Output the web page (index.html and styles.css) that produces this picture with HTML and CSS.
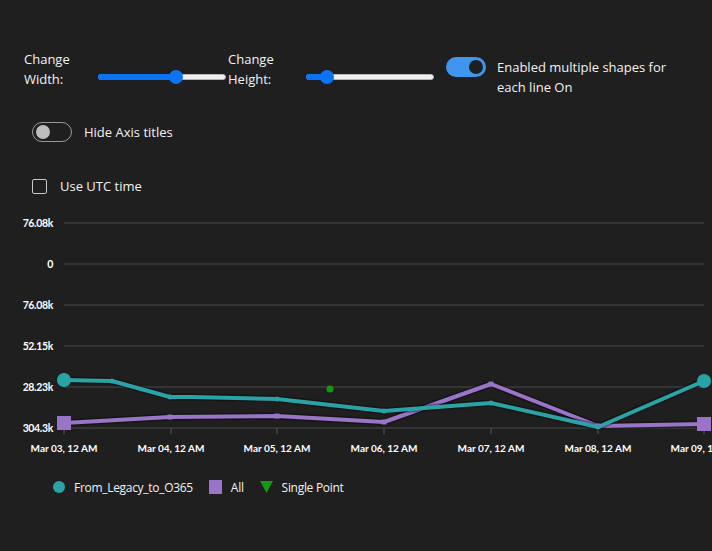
FILE: index.html
```html
<!DOCTYPE html>
<html>
<head>
<meta charset="utf-8">
<link rel="stylesheet" href="styles.css">
</head>
<body>
<div class="page">
  <div class="controls">
    <div class="label label-w">Change Width:</div>
    <div class="slider"><div class="fill" style="width:61%"></div><div class="thumb" style="left:61%"></div></div>
    <div class="label label-h">Change Height:</div>
    <div class="slider"><div class="fill" style="width:16%"></div><div class="thumb" style="left:16%"></div></div>
    <div class="toggle-group">
      <div class="toggle on"><div class="knob"></div></div>
      <div class="toggle-text">Enabled multiple shapes for each line On</div>
    </div>
  </div>
  <div class="row row-axis">
    <div class="toggle off"><div class="knob"></div></div>
    <div class="row-text">Hide Axis titles</div>
  </div>
  <div class="row row-utc">
    <div class="checkbox"></div>
    <div class="row-text utc-text">Use UTC time</div>
  </div>
  <svg class="chart" width="712" height="260" viewBox="0 210 712 260">
    <defs>
      <clipPath id="yclip"><rect x="23" y="200" width="689" height="280"/></clipPath>
    </defs>
    <g class="grid">
      <line x1="64" y1="223" x2="704" y2="223"/>
      <line x1="64" y1="264" x2="704" y2="264"/>
      <line x1="64" y1="305" x2="704" y2="305"/>
      <line x1="64" y1="346" x2="704" y2="346"/>
      <line x1="64" y1="387" x2="704" y2="387"/>
      <line x1="64" y1="428" x2="704" y2="428"/>
    </g>
    <g class="ticks">
      <line x1="64" y1="428" x2="64" y2="434"/>
      <line x1="171" y1="428" x2="171" y2="434"/>
      <line x1="277" y1="428" x2="277" y2="434"/>
      <line x1="384" y1="428" x2="384" y2="434"/>
      <line x1="491" y1="428" x2="491" y2="434"/>
      <line x1="598" y1="428" x2="598" y2="434"/>
      <line x1="704" y1="428" x2="704" y2="434"/>
    </g>
    <g class="ylabels" clip-path="url(#yclip)">
      <text x="53" y="227">76.08k</text>
      <text x="53" y="268">0</text>
      <text x="53" y="309">76.08k</text>
      <text x="53" y="350">152.15k</text>
      <text x="53" y="391">28.23k</text>
      <text x="53" y="432">304.3k</text>
    </g>
    <g class="xlabels">
      <text x="64" y="452">Mar 03, 12 AM</text>
      <text x="171" y="452">Mar 04, 12 AM</text>
      <text x="277" y="452">Mar 05, 12 AM</text>
      <text x="384" y="452">Mar 06, 12 AM</text>
      <text x="491" y="452">Mar 07, 12 AM</text>
      <text x="598" y="452">Mar 08, 12 AM</text>
      <text x="704" y="452">Mar 09, 12 AM</text>
    </g>
    <polyline class="shadow" points="64,423 170,417 277,416 384,422 491,384 598,426 704,424"/>
    <polyline class="purple" points="64,423 170,417 277,416 384,422 491,384 598,426 704,424"/>
    <polyline class="shadow" points="64,380 112,381 170,397 193,397 277,399 384,411 491,403 598,427 704,381"/>
    <polyline class="teal" points="64,380 112,381 170,397 193,397 277,399 384,411 491,403 598,427 704,381"/>
    <g class="pm">
      <rect x="167.5" y="414.5" width="5" height="5"/>
      <rect x="274.5" y="413.5" width="5" height="5"/>
      <rect x="381.5" y="419.5" width="5" height="5"/>
      <rect x="488.5" y="381.5" width="5" height="5"/>
      <rect x="595.5" y="423.5" width="5" height="5"/>
    </g>
    <g class="tm">
      <circle cx="112" cy="381" r="2.5"/>
      <circle cx="170" cy="397" r="2.5"/>
      <circle cx="277" cy="399" r="2.5"/>
      <circle cx="384" cy="411" r="2.5"/>
      <circle cx="491" cy="403" r="2.5"/>
      <circle cx="598" cy="427" r="2.5"/>
    </g>
    <rect class="psq" x="57" y="416" width="14" height="14"/>
    <rect class="psq" x="697" y="417" width="14" height="14"/>
    <circle class="tcirc" cx="64" cy="380" r="7"/>
    <circle class="tcirc" cx="704" cy="381" r="7"/>
    <circle class="green" cx="330" cy="389" r="3.5"/>
  </svg>
  <div class="legend">
    <div class="legend-item"><span class="lg-circle"></span>From_Legacy_to_O365</div>
    <div class="legend-item"><span class="lg-square"></span>All</div>
    <div class="legend-item"><svg class="lg-tri" width="13" height="14" viewBox="0 0 13 14"><polygon points="0,1 13,1 6.5,13"/></svg>Single Point</div>
  </div>
</div>
</body>
</html>
```
FILE: styles.css
```css
html, body {
  margin: 0;
  padding: 0;
  background: #1f1f1f;
  color: #f2f2f2;
  font-family: "Open Sans", "Noto Sans", sans-serif;
  font-size: 13px;
}
.page {
  width: 712px;
  height: 551px;
  overflow: hidden;
}
.controls {
  display: flex;
  align-items: flex-start;
  padding-left: 24px;
  margin-top: 49px;
}
.label {
  line-height: 20px;
}
.label-w { width: 74px; }
.label-h { width: 78px; margin-left: 2px; }
.slider {
  position: relative;
  width: 128px;
  height: 6px;
  margin-top: 25px;
  background: #efefef;
  border: 1px solid #b5b5b5;
  border-radius: 4px;
  box-sizing: border-box;
}
.slider .fill {
  position: absolute;
  left: -1px;
  top: -1px;
  bottom: -1px;
  background: #0b74f5;
  border-radius: 4px;
}
.slider .thumb {
  position: absolute;
  top: 50%;
  width: 14px;
  height: 14px;
  margin: -7px 0 0 -7px;
  border-radius: 50%;
  background: #0b74f5;
}
.toggle-group {
  display: flex;
  align-items: flex-start;
  margin-left: 12px;
  margin-top: 8px;
}
.toggle {
  position: relative;
  width: 40px;
  height: 20px;
  border-radius: 10px;
  box-sizing: border-box;
  flex: none;
}
.toggle.on {
  background: #4096ef;
}
.toggle.on .knob {
  position: absolute;
  right: 3px;
  top: 3px;
  width: 14px;
  height: 14px;
  border-radius: 50%;
  background: #1f1f1f;
}
.toggle.off {
  border: 1px solid #9a9a9a;
}
.toggle.off .knob {
  position: absolute;
  left: 3px;
  top: 2px;
  width: 14px;
  height: 14px;
  border-radius: 50%;
  background: #bdbdbd;
}
.toggle-text {
  width: 190px;
  margin-left: 11px;
  margin-top: 0;
  line-height: 20px;
}
.row {
  display: flex;
  align-items: center;
  padding-left: 32px;
}
.row-axis {
  margin-top: 25px;
  height: 20px;
}
.row-text {
  margin-left: 12px;
  line-height: 20px;
}
.row-utc {
  margin-top: 36px;
  height: 16px;
}
.checkbox {
  width: 15px;
  height: 15px;
  box-sizing: border-box;
  border: 1.5px solid #c8c8c8;
  border-radius: 2px;
}
.utc-text { margin-left: 13px; }
.chart {
  display: block;
  margin-top: 16px;
}
.grid line {
  stroke: #4a4a4a;
  stroke-width: 1;
}
.ticks line {
  stroke: #5a5a5a;
  stroke-width: 1;
}
.ylabels text, .xlabels text {
  fill: #ffffff;
  font-family: "Lato", "Liberation Sans", sans-serif;
  font-size: 10px;
  font-weight: 700;
}
.ylabels text { text-anchor: end; font-size: 10.5px; letter-spacing: -0.35px; }
.xlabels text { text-anchor: middle; }
.shadow {
  fill: none;
  stroke: rgba(0, 0, 0, 0.35);
  stroke-width: 7;
  stroke-linejoin: round;
}
.purple {
  fill: none;
  stroke: #9a74c8;
  stroke-width: 4;
  stroke-linejoin: round;
}
.teal {
  fill: none;
  stroke: #2aa3a6;
  stroke-width: 4;
  stroke-linejoin: round;
}
.pm rect, .psq { fill: #9a74c8; }
.tm circle, .tcirc { fill: #2aa3a6; }
.green { fill: #149914; }
.legend {
  display: flex;
  align-items: center;
  padding-left: 53px;
  margin-top: 7px;
  height: 20px;
  font-size: 12px;
  letter-spacing: -0.3px;
}
.legend-item {
  display: flex;
  align-items: center;
  margin-right: 16px;
}
.lg-circle {
  width: 12px;
  height: 12px;
  border-radius: 50%;
  background: #2aa3a6;
  margin-right: 9px;
}
.lg-square {
  width: 13px;
  height: 14px;
  background: #9a74c8;
  margin-right: 9px;
}
.lg-tri {
  margin-right: 9px;
}
.lg-tri polygon { fill: #149914; }
```
